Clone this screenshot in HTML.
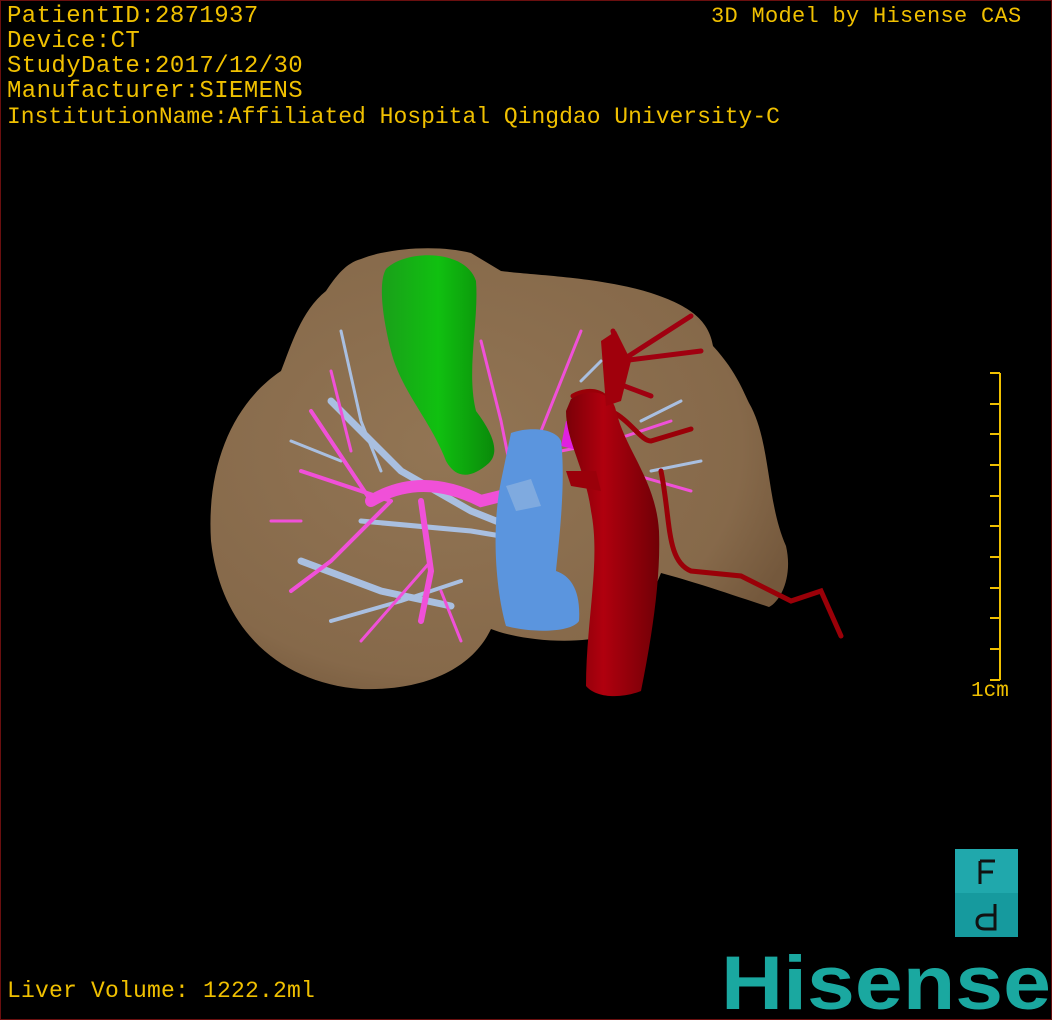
<!DOCTYPE html>
<html><head><meta charset="utf-8"><style>
html,body{margin:0;padding:0;background:#000;}
#w{position:relative;width:1050px;height:1018px;border:1px solid #6a0f0f;background:#000;overflow:hidden;font-family:"Liberation Mono",monospace;color:#f0c000;}
.t{position:absolute;left:6px;font-size:24px;letter-spacing:0.4px;line-height:25px;white-space:nowrap;}
</style></head><body><div id="w">
<div class="t" style="top:3px">PatientID:2871937</div>
<div class="t" style="top:28px">Device:CT</div>
<div class="t" style="top:53px">StudyDate:2017/12/30</div>
<div class="t" style="top:78px">Manufacturer:SIEMENS</div>
<div class="t" style="top:104px;font-size:23px;letter-spacing:0">InstitutionName:Affiliated Hospital Qingdao University-C</div>
<div class="t" style="left:710px;top:3px;font-size:22px;letter-spacing:0.3px">3D Model by Hisense CAS</div>
<div class="t" style="top:978px;font-size:23px;letter-spacing:0.2px">Liver Volume: 1222.2ml</div>
<div class="t" style="left:970px;top:678px;font-size:21px;letter-spacing:0">1cm</div>
<svg width="1050" height="1018" style="position:absolute;left:0;top:0">
<defs>
<radialGradient id="lv" cx="0.4" cy="0.45" r="0.65"><stop offset="0" stop-color="#927554"/><stop offset="0.8" stop-color="#86694a"/><stop offset="1" stop-color="#74583c"/></radialGradient>
<linearGradient id="gr" x1="0" x2="1"><stop offset="0" stop-color="#1aa01a"/><stop offset="0.5" stop-color="#10c010"/><stop offset="1" stop-color="#0a8a0a"/></linearGradient>
<linearGradient id="rd" x1="0" x2="1"><stop offset="0" stop-color="#7a0008"/><stop offset="0.4" stop-color="#b0000e"/><stop offset="1" stop-color="#700006"/></linearGradient>
</defs>
<path d="M360 258 C390 246 440 244 470 252 L500 270 C530 274 600 276 650 292 C690 305 708 320 712 345 C735 370 742 390 748 402 C770 440 765 500 785 545 C792 575 780 600 768 606 C720 590 690 580 660 572 L640 620 C600 650 520 640 490 628 C470 670 420 690 360 688 C280 682 220 630 210 540 C205 460 235 400 280 370 C290 345 300 310 325 290 C335 275 345 262 360 258 Z" fill="url(#lv)"/>
<g fill="none" stroke="#a9bfe0" stroke-linecap="round">
<path d="M330 400 L400 470 L470 510 L520 530" stroke-width="7"/>
<path d="M300 560 L380 590 L450 605" stroke-width="7"/>
<path d="M340 330 L360 420 L380 470" stroke-width="3"/>
<path d="M360 520 L470 530 L500 535" stroke-width="5"/>
<path d="M330 620 L400 600 L460 580" stroke-width="4"/>
<path d="M290 440 L340 460" stroke-width="3"/>
<path d="M650 470 L700 460 M640 420 L680 400 M580 380 L600 360" stroke-width="3"/>
</g>
<g fill="none" stroke="#f050d8" stroke-linecap="round">
<path d="M370 500 Q420 470 480 500 L520 490" stroke-width="12"/>
<path d="M420 500 L430 570 L420 620" stroke-width="6"/>
<path d="M390 500 L300 470 M390 500 L330 560 L290 590 M370 500 L310 410" stroke-width="4"/>
<path d="M430 560 L360 640 M440 590 L460 640 M300 520 L270 520 M350 450 L330 370" stroke-width="3"/>
<path d="M480 340 L500 420 L510 470 M580 330 L560 380 L540 430 M560 450 L610 440 L670 420 M620 470 L690 490" stroke-width="3"/>
</g>
<path d="M565 420 L585 418 L580 450 L560 445 Z" fill="#e020e0"/>
<path d="M385 268 C405 248 465 248 475 280 C478 320 465 370 475 410 C490 430 500 450 488 462 C470 478 455 478 445 460 C430 420 400 390 390 350 C380 310 378 280 385 268 Z" fill="url(#gr)"/>
<path d="M510 432 C530 425 555 428 560 440 C565 480 558 540 555 570 C570 575 580 590 578 620 C570 632 530 632 505 625 C495 590 490 530 500 480 Z" fill="#5b95de"/>
<path d="M505 485 L530 478 L540 505 L515 510 Z" fill="#8fb3e0" opacity="0.7"/>
<path d="M572 395 C590 385 610 392 610 410 C630 420 640 440 650 440 L690 428 M660 470 C670 520 665 560 690 570 L740 575 L790 600 L820 590 L840 635" fill="none" stroke="#9a0008" stroke-width="5" stroke-linecap="round"/>
<path d="M612 330 L620 360 L690 315 M620 360 L700 350 M610 380 L650 395" fill="none" stroke="#a00010" stroke-width="5" stroke-linecap="round"/>
<path d="M570 398 C590 385 612 392 615 410 C625 450 655 480 658 530 C660 580 650 640 640 690 C620 698 595 697 585 685 C585 620 600 560 590 510 C585 470 565 440 565 410 Z" fill="url(#rd)"/>
<path d="M600 340 L615 330 L630 360 L620 400 L605 405 Z" fill="#a0000c"/>
<path d="M565 470 L595 470 L600 490 L570 485 Z" fill="#9a000a"/>
<g stroke="#f0c000" stroke-width="2" fill="none">
<path d="M999 372 V679"/>
<path d="M989 372 H999 M989 403 H999 M989 433 H999 M989 464 H999 M989 495 H999 M989 525 H999 M989 556 H999 M989 587 H999 M989 617 H999 M989 648 H999 M989 679 H999"/>
</g>
<rect x="954" y="848" width="63" height="44" fill="#20a8ac"/>
<rect x="954" y="892" width="63" height="44" fill="#169a9e"/>
<path d="M979 860 V883 M979 860 H994 M979 871 H992" stroke="#111" stroke-width="3" fill="none"/>
<path d="M994 903 V928 H984 Q976 928 976 921 Q976 914 984 914 H994" stroke="#111" stroke-width="3" fill="none"/>
<text x="720" y="1008" font-family="Liberation Sans,sans-serif" font-weight="bold" font-size="76" fill="#1aa8a0" textLength="330" lengthAdjust="spacingAndGlyphs">Hisense</text>
</svg>
</div></body></html>
